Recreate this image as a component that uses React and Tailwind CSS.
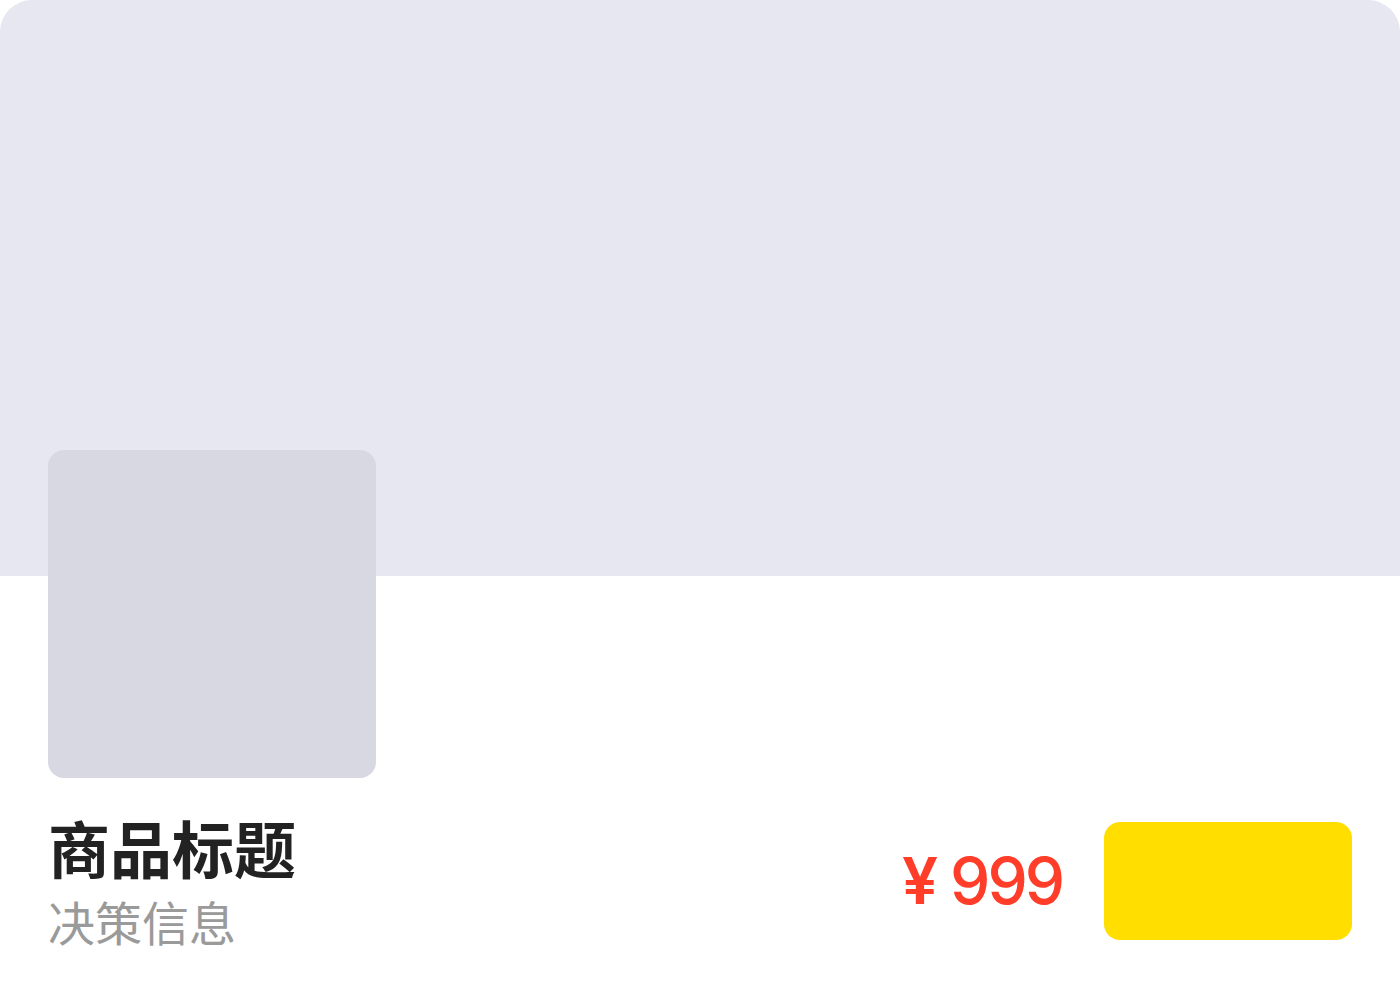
export default function App() {
    return (
        <div className="w-[1400px] h-[998px] bg-white rounded-t-[32px] overflow-hidden font-['Noto_Sans_CJK_SC',sans-serif]">
            {/* banner */}
            <div className="h-[576px] bg-[#e6e7f1]" />

            <div className="px-12">
                {/* product thumb */}
                <div className="-mt-[126px] w-[328px] h-[328px] rounded-2xl bg-[#d8d8e2]" />

                <div className="mt-[38px] flex items-start justify-between">
                    <div>
                        <h1 className="text-[62px] leading-[62px] font-bold text-[#222222]">商品标题</h1>
                        <p className="mt-[19px] text-[47px] leading-[47px] text-[#9a9a9a]">决策信息</p>
                    </div>
                    <div className="mt-[6px] flex items-center gap-[42px]">
                        <div className="flex items-center gap-[12px] text-[#ff3d29] font-['Inter','Noto_Sans_CJK_SC',sans-serif] text-[64px] leading-none font-medium">
                            <span className="font-semibold">¥</span>
                            <span className="tracking-[-3px]">999</span>
                        </div>
                        <button className="w-[248px] h-[118px] rounded-2xl bg-[#ffde00]" />
                    </div>
                </div>
            </div>
        </div>
    );
}
